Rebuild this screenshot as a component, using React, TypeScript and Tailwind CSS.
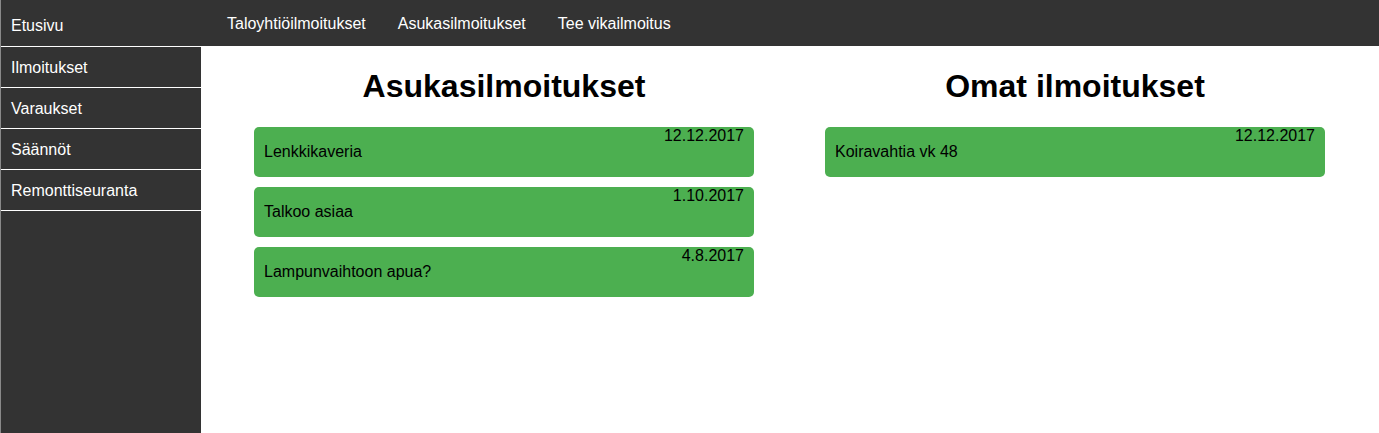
import React from 'react';

const sideLinks = ['Ilmoitukset', 'Varaukset', 'Säännöt', 'Remonttiseuranta'];
const topLinks = ['Taloyhtiöilmoitukset', 'Asukasilmoitukset', 'Tee vikailmoitus'];

const residentNotices = [
  { title: 'Lenkkikaveria', date: '12.12.2017' },
  { title: 'Talkoo asiaa', date: '1.10.2017' },
  { title: 'Lampunvaihtoon apua?', date: '4.8.2017' },
];

const ownNotices = [{ title: 'Koiravahtia vk 48', date: '12.12.2017' }];

const NoticeCard = ({ title, date }: { title: string; date: string }) => (
  <div className="h-[50px] rounded-[5px] bg-[#4caf50] pl-[10px] pr-[10px] text-base text-black">
    <div className="text-right leading-[18px]">{date}</div>
    <div className="-mt-[2px] leading-[18px]">{title}</div>
  </div>
);

const Column = ({ heading, items }: { heading: string; items: { title: string; date: string }[] }) => (
  <section className="w-[500px]">
    <h1 className="mt-[22px] mb-[22px] text-center text-[32px] font-bold leading-[37px] text-black">{heading}</h1>
    <div className="flex flex-col gap-[10px]">
      {items.map((item, i) => (
        <NoticeCard key={i} title={item.title} date={item.date} />
      ))}
    </div>
  </section>
);

const App = () => {
  return (
    <div className="flex min-h-screen bg-white font-['Liberation_Sans',Arial,sans-serif] text-base">
      {/* Sidebar */}
      <aside className="w-[201px] shrink-0 border-l border-[#8a8a8a] bg-[#333333] text-white">
        <a className="flex h-[47px] items-center border-b border-white px-[10px] pt-[6px]">Etusivu</a>
        {sideLinks.map((label) => (
          <a key={label} className="flex h-[41px] items-center border-b border-white px-[10px] pt-[1px]">
            {label}
          </a>
        ))}
      </aside>

      <div className="flex flex-1 flex-col">
        {/* Top nav */}
        <nav className="flex h-[46px] items-center bg-[#333333] pl-[10px] text-white">
          {topLinks.map((label) => (
            <a key={label} className="px-4 pt-[1px] leading-[18px]">
              {label}
            </a>
          ))}
        </nav>

        {/* Content */}
        <main className="flex justify-center gap-[71px] pr-[1px]">
          <Column heading="Asukasilmoitukset" items={residentNotices} />
          <Column heading="Omat ilmoitukset" items={ownNotices} />
        </main>
      </div>
    </div>
  );
};

export default App;
